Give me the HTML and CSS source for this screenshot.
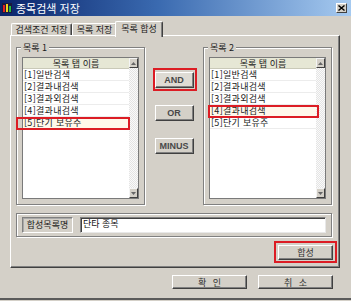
FILE: index.html
```html
<!DOCTYPE html>
<html lang="ko">
<head>
<meta charset="utf-8">
<link rel="stylesheet" href="styles.css">
</head>
<body>
<div class="window">
  <div class="titlebar">
    <svg class="app-icon" width="10" height="10" viewBox="0 0 10 10">
      <rect x="0" y="0" width="10" height="10" fill="#1a1a40"/>
      <rect x="1" y="2" width="2" height="7" fill="#e02020"/>
      <rect x="4" y="1" width="2" height="8" fill="#f0d020"/>
      <rect x="7" y="3" width="2" height="6" fill="#20c040"/>
    </svg>
    <span class="title">종목검색 저장</span>
    <span class="close">
      <svg width="7" height="6" viewBox="0 0 7 6"><path d="M0.5 0.5 L6.5 5.5 M6.5 0.5 L0.5 5.5" stroke="#000" stroke-width="1.4"/></svg>
    </span>
  </div>
  <div class="tabs">
    <div class="tab tab-1">검색조건 저장</div>
    <div class="tab tab-2">목록 저장</div>
    <div class="tab tab-3 active">목록 합성</div>
  </div>
  <div class="panel">
    <div class="lists">
      <div class="group">
        <div class="legend">목록 1</div>
        <div class="listbox">
          <div class="list-main">
            <div class="list-head">목록 탭 이름</div>
            <div class="row">[1]일반검색</div>
            <div class="row">[2]결과내검색</div>
            <div class="row">[3]결과외검색</div>
            <div class="row">[4]결과내검색</div>
            <div class="row sel">[5]단기 보유주</div>
          </div>
          <div class="scrollbar">
            <span class="sb-btn"><svg width="5" height="3" viewBox="0 0 5 3"><path d="M0 3 L2.5 0 L5 3Z" fill="#666"/></svg></span>
            <span class="sb-track"></span>
            <span class="sb-btn"><svg width="5" height="3" viewBox="0 0 5 3"><path d="M0 0 L2.5 3 L5 0Z" fill="#666"/></svg></span>
          </div>
        </div>
        <span class="mark mark-l1"></span>
      </div>
      <div class="ops">
        <div class="btn-wrap">
          <div class="btn op">AND</div>
          <span class="mark mark-and"></span>
        </div>
        <div class="btn op">OR</div>
        <div class="btn op">MINUS</div>
      </div>
      <div class="group">
        <div class="legend">목록 2</div>
        <div class="listbox">
          <div class="list-main">
            <div class="list-head">목록 탭 이름</div>
            <div class="row">[1]일반검색</div>
            <div class="row">[2]결과내검색</div>
            <div class="row">[3]결과외검색</div>
            <div class="row sel">[4]결과내검색</div>
            <div class="row">[5]단기 보유주</div>
          </div>
          <div class="scrollbar">
            <span class="sb-btn"><svg width="5" height="3" viewBox="0 0 5 3"><path d="M0 3 L2.5 0 L5 3Z" fill="#666"/></svg></span>
            <span class="sb-track"></span>
            <span class="sb-btn"><svg width="5" height="3" viewBox="0 0 5 3"><path d="M0 0 L2.5 3 L5 0Z" fill="#666"/></svg></span>
          </div>
        </div>
        <span class="mark mark-l2"></span>
      </div>
    </div>
    <div class="name-group">
      <div class="name-label">합성목록명</div>
      <div class="name-input">단타 종목</div>
    </div>
    <div class="merge-row">
      <div class="btn-wrap">
        <div class="btn merge">합성</div>
        <span class="mark mark-merge"></span>
      </div>
    </div>
  </div>
  <div class="footer">
    <div class="btn foot">확 인</div>
    <div class="btn foot">취 소</div>
  </div>
</div>
</body>
</html>
```

FILE: styles.css
```css
* { box-sizing: border-box; }
html, body { margin: 0; padding: 0; }
body {
  background: #d4d0c8;
  font-family: "Noto Sans CJK KR", "Noto Sans", sans-serif;
  font-size: 9px;
  color: #1a1a1a;
}
.window {
  width: 351px;
  height: 300px;
  background: #d4d0c8;
  border-bottom: 2px solid #5a5a5a;
  overflow: hidden;
}
.titlebar {
  height: 16px;
  display: flex;
  align-items: center;
  padding-left: 2px;
  background: linear-gradient(to right, #0a246a 0%, #3a6ab0 45%, #a6caf0 100%);
}
.app-icon { margin-right: 4px; }
.title {
  color: #fff;
  font-size: 11px;
  font-weight: normal;
  line-height: 16px;
}
.close {
  margin-left: auto;
  margin-right: 4px;
  width: 11px;
  height: 10px;
  background: #d4d0c8;
  border: 1px solid;
  border-color: #fff #404040 #404040 #fff;
  display: flex;
  align-items: center;
  justify-content: center;
}
.tabs {
  height: 19px;
  display: flex;
  align-items: flex-end;
  padding-left: 11px;
}
.tab {
  height: 12px;
  line-height: 11px;
  text-align: center;
  background: #d4d0c8;
  border-top: 1px solid #fff;
  border-left: 1px solid #fff;
  border-right: 1px solid #404040;
  border-radius: 2px 2px 0 0;
  box-shadow: inset -1px 0 #808080;
  white-space: nowrap;
}
.tab-1 { width: 61px; }
.tab-2 { width: 45px; }
.tab-3 { width: 48px; }
.tab.active {
  height: 16px;
  margin: 0 -2px -2px -2px;
  padding-top: 1px;
  position: relative;
  z-index: 1;
}
.panel {
  margin-left: 10px;
  width: 330px;
  height: 233px;
  border: 1px solid;
  border-color: #fff #404040 #404040 #fff;
  box-shadow: inset -1px -1px #808080;
  padding: 11px 0 0 5px;
}
.lists {
  display: grid;
  grid-template-columns: 129px 58px 129px;
}
.group {
  position: relative;
  height: 158px;
  border: 1px solid #808080;
  box-shadow: inset 1px 1px #fff, 1px 1px #fff;
  padding: 0 5px 5px 5px;
}
.legend {
  width: fit-content;
  margin: -6px 0 0 -1px;
  padding: 0 2px;
  height: 11px;
  line-height: 11px;
  background: #d4d0c8;
}
.listbox {
  margin-top: 4px;
  height: 142px;
  display: flex;
  border: 1px solid #7a7a7a;
  background: #fff;
}
.list-main { flex: 1; min-width: 0; }
.list-head {
  height: 11px;
  line-height: 11px;
  text-align: center;
  background: #e6e7d5;
  border-bottom: 1px solid #c9c9b8;
}
.row {
  height: 12px;
  line-height: 11px;
  padding-left: 1px;
  border-bottom: 1px solid #ececec;
  white-space: nowrap;
  letter-spacing: 0.3px;
}
.row.sel { background: #fff7ea; }
.scrollbar {
  width: 9px;
  display: flex;
  flex-direction: column;
}
.sb-btn {
  height: 10px;
  background: #d4d0c8;
  border: 1px solid;
  border-color: #f4f4f4 #404040 #404040 #f4f4f4;
  display: flex;
  align-items: center;
  justify-content: center;
}
.sb-track {
  flex: 1;
  background: repeating-conic-gradient(#e4e4e4 0 25%, #fafafa 0 50%) 0 0 / 2px 2px;
}
.mark {
  position: absolute;
  border: 2px solid #dc1c24;
  pointer-events: none;
}
.mark-l1 { left: -1px; top: 69px; width: 114px; height: 13px; }
.mark-l2 { left: 4px; top: 57px; width: 111px; height: 13px; }
.ops {
  display: flex;
  flex-direction: column;
  align-items: center;
  gap: 17px;
  padding-top: 25px;
}
.btn-wrap { position: relative; }
.btn {
  background: #d4d0c8;
  border: 1px solid;
  border-color: #fff #404040 #404040 #fff;
  box-shadow: inset -1px -1px #808080;
  display: flex;
  align-items: center;
  justify-content: center;
  color: #333;
}
.op {
  width: 39px;
  height: 16px;
  font-family: "Liberation Sans", Arial, sans-serif;
  font-weight: bold;
  font-size: 9px;
  color: #484848;
}
.btn-wrap .op { background: #dedbd4; }
.mark-and { top: -4px; bottom: -3px; left: -2px; right: -3px; }
.name-group {
  margin-top: 8px;
  width: 316px;
  height: 24px;
  border: 1px solid #808080;
  box-shadow: inset 1px 1px #fff, 1px 1px #fff;
  display: flex;
  align-items: center;
  gap: 7px;
  padding: 0 5px;
}
.name-label {
  width: 51px;
  height: 16px;
  line-height: 14px;
  text-align: center;
  border: 1px solid;
  border-color: #808080 #fff #fff #808080;
  box-shadow: inset 1px 1px #a8a8a8;
}
.name-input {
  flex: 1;
  height: 16px;
  background: #fff;
  border: 1px solid;
  border-color: #808080 #e8e8e8 #e8e8e8 #808080;
  box-shadow: inset 1px 1px #404040;
  padding-left: 2px;
  line-height: 11px;
  color: #111;
}
.merge-row {
  display: flex;
  justify-content: flex-end;
  margin-top: 8px;
  margin-right: 6px;
}
.merge { width: 55px; height: 15px; }
.mark-merge { top: -4px; bottom: -3px; left: -4px; right: -4px; }
.footer {
  display: flex;
  justify-content: flex-end;
  gap: 11px;
  padding-right: 18px;
  margin-top: 7px;
}
.foot {
  width: 75px;
  height: 14px;
  word-spacing: 4px;
}
```
